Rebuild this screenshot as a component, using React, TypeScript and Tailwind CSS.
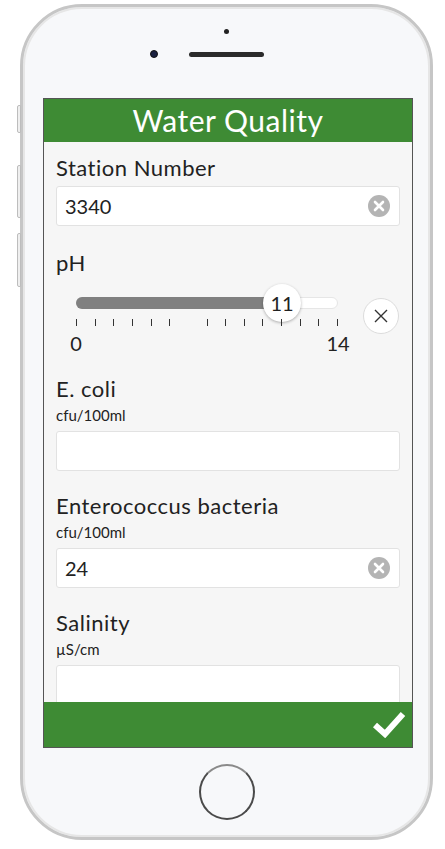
const ClearIcon = () => (
  <svg width="22" height="22" viewBox="0 0 22 22">
    <circle cx="11" cy="11" r="11" fill="#b4b4b4" />
    <path d="M7 7 L15 15 M15 7 L7 15" stroke="#fff" strokeWidth="2.6" strokeLinecap="round" />
  </svg>
);

const Field = ({ label, units, value }: { label: string; units?: string; value?: string }) => (
  <div className="flex flex-col">
    <div className="text-[22px] leading-[24px] tracking-[0.5px] text-[#222]">{label}</div>
    {units && <div className="mt-[5px] text-[15px] leading-[18px] text-[#222]">{units}</div>}
    <div
      className={`${units ? "mt-[7px]" : "mt-[6px]"} h-[40px] rounded-[3px] border border-[#e2e2e2] bg-white flex items-center pl-[8px] pr-[9px]`}
    >
      <span className="text-[20px] text-[#222] flex-1">{value}</span>
      {value && <ClearIcon />}
    </div>
  </div>
);

const ticks = [0, 1, 2, 3, 4, 5, 7, 8, 9, 10, 11, 12, 13, 14];

const Slider = () => (
  <div className="flex flex-col">
    <div className="text-[22px] leading-[24px] tracking-[0.5px] text-[#222]">pH</div>
    <div className="mt-[9px] flex items-start">
      <div className="ml-[20px] w-[262px] flex flex-col">
        <div className="relative h-[38px] flex items-center">
          <div className="h-[12px] w-full rounded-full bg-white border border-[#e6e6e6]" />
          <div className="absolute left-0 top-[13px] h-[12px] w-[200px] rounded-full bg-[#808080]" />
          <div className="absolute left-[187px] top-0 h-[38px] w-[38px] rounded-full bg-white shadow-[0_1px_3px_rgba(0,0,0,0.3)] flex items-center justify-center text-[20px] text-[#222]">
            11
          </div>
        </div>
        <div className="relative h-[7px] -mt-[3px]">
          {ticks.map((t) => (
            <div
              key={t}
              className="absolute top-0 h-[7px] w-px bg-[#333]"
              style={{ left: `${(t / 14) * 261}px` }}
            />
          ))}
        </div>
        <div className="mt-[7px] flex justify-between text-[20px] leading-[20px] text-[#222]">
          <div className="w-0 flex justify-center">0</div>
          <div className="w-0 flex justify-center">14</div>
        </div>
      </div>
      <div className="ml-auto mr-[1px] mt-[14px] h-[36px] w-[36px] rounded-full bg-white border border-[#dcdcdc] flex items-center justify-center">
        <svg width="14" height="14" viewBox="0 0 14 14">
          <path d="M1 1 L13 13 M13 1 L1 13" stroke="#333" strokeWidth="1.4" />
        </svg>
      </div>
    </div>
  </div>
);

export default function App() {
  return (
    <div className="min-h-screen bg-white pl-[20px] pt-[4px] font-['Lato',sans-serif]">
      <div className="relative w-[413px] h-[836px]">
        {/* side buttons */}
        <div className="absolute -left-[3px] top-[101px] h-[28px] w-[4px] rounded-l-[2px] border border-[#bdbdbd] bg-[#efefef]" />
        <div className="absolute -left-[3px] top-[161px] h-[53px] w-[4px] rounded-l-[2px] border border-[#bdbdbd] bg-[#efefef]" />
        <div className="absolute -left-[3px] top-[229px] h-[54px] w-[4px] rounded-l-[2px] border border-[#bdbdbd] bg-[#efefef]" />

        <div className="h-full w-full rounded-[62px] border-[3px] border-[#c6c6c6] bg-[#f7f8fa] shadow-[inset_0_0_0_2px_#e6e6e6] flex flex-col overflow-hidden">
          {/* top bezel */}
          <div className="h-[91px] flex flex-col items-center">
            <div className="mt-[22px] h-[5px] w-[5px] rounded-full bg-[#222]" />
            <div className="mt-[16px] flex items-center">
              <div className="h-[8px] w-[8px] rounded-full bg-[#1a2140] border border-[#111]" />
              <div className="ml-[31px] h-[5px] w-[75px] rounded-full bg-[#2b2b2b]" />
              <div className="ml-[31px] w-[8px]" />
            </div>
          </div>

          {/* screen */}
          <div className="ml-[20px] w-[370px] h-[650px] border border-[#555] flex flex-col bg-[#f6f6f6]">
            <div className="h-[43px] bg-[#3e8b34] flex items-center justify-center text-white text-[30px] tracking-[0.5px]">
              Water Quality
            </div>
            <div className="flex-1 overflow-hidden px-[12px] pt-[14px] flex flex-col gap-[23px]">
              <Field label="Station Number" value="3340" />
              <div className="mt-[2px]">
                <Slider />
              </div>
              <div className="mt-[1px]">
                <Field label="E. coli" units="cfu/100ml" />
              </div>
              <Field label="Enterococcus bacteria" units="cfu/100ml" value="24" />
              <Field label="Salinity" units="µS/cm" />
            </div>
            <div className="h-[45px] bg-[#3e8b34] flex items-center justify-end pr-[6px]">
              <svg width="34" height="27" viewBox="0 0 34 27">
                <path d="M3 14 L13 23 L31 3" fill="none" stroke="#fff" strokeWidth="6" strokeLinejoin="miter" />
              </svg>
            </div>
          </div>

          {/* home button */}
          <div className="flex justify-center">
            <div className="mt-[16px] h-[56px] w-[56px] rounded-full border-[2px] border-[#4a4a4a] border-t-[#8a8a8a] bg-[#f7f8fa]" />
          </div>
        </div>
      </div>
    </div>
  );
}
